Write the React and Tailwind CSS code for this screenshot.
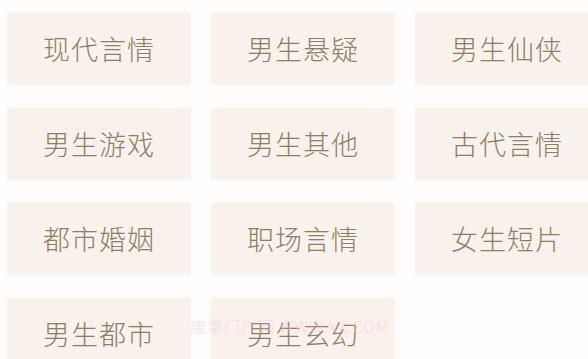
const tags = [
  "现代言情", "男生悬疑", "男生仙侠",
  "男生游戏", "男生其他", "古代言情",
  "都市婚姻", "职场言情", "女生短片",
  "男生都市", "男生玄幻",
];

export default function App() {
  return (
    <div className="relative w-[588px] h-[359px] overflow-hidden bg-[#fefdfc]">
      <div className="grid grid-cols-[182px_182px_182px] gap-x-[22px] gap-y-[25px] pl-[8px] pt-[13px]">
        {tags.map((t) => (
          <div
            key={t}
            className="h-[70px] flex items-center justify-center bg-[#f9f2ec] shadow-[0_1px_3px_rgba(120,100,80,0.12)]"
          >
            <span className="text-[27px] leading-none tracking-[1px] font-light text-[#8b7f68] font-['Noto_Sans_CJK_SC',sans-serif]">
              {t}
            </span>
          </div>
        ))}
      </div>
      {/* watermark */}
      <div className="absolute left-[190px] top-[314px] text-[16px] tracking-[1px] text-[#f2c4e2]/60 font-light font-['Noto_Sans_CJK_SC',sans-serif]">
        康掌门户网 WWW.XX.COM
      </div>
    </div>
  );
}
